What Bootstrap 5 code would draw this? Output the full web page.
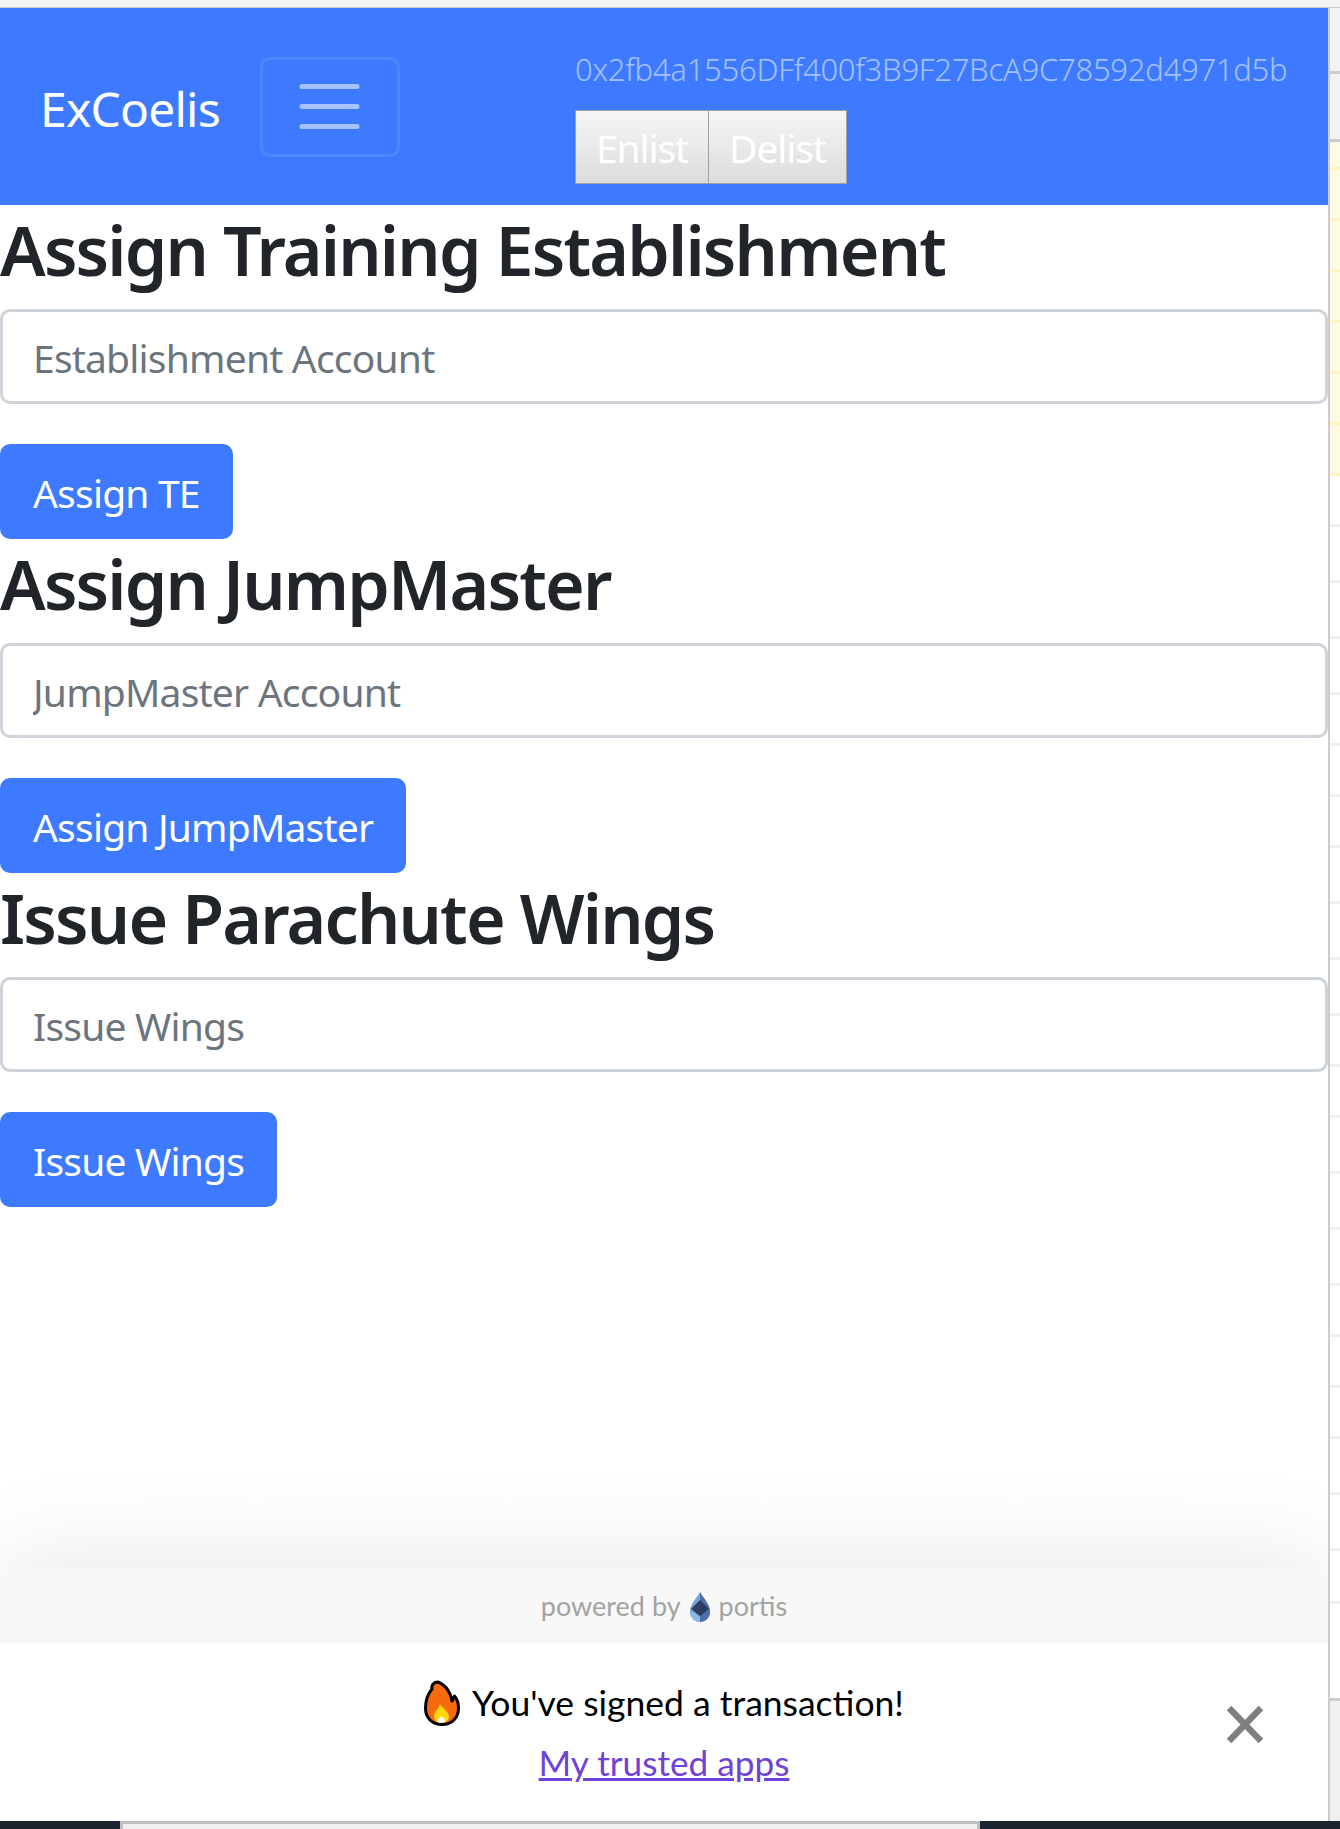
<!DOCTYPE html>
<html lang="en">
<head>
  <meta charset="UTF-8" />
  <meta name="viewport" content="width=device-width, initial-scale=1.0" />
  <title>ExCoelis</title>
  <link href="https://cdn.jsdelivr.net/npm/bootstrap@5.3.0/dist/css/bootstrap.min.css" rel="stylesheet" />
  <style>
    /* the screenshot is a page zoomed to 250%, so everything rem based scales with this */
    html { font-size: 40px; }
    body {
      --bs-body-font-family: "Noto Sans", sans-serif;
      height: 1829px;
      overflow: hidden;
      background: #fff;
      display: flex;
      flex-direction: column;
    }
    .top-strip { height: 8px; background: #f2f2f2; border-bottom: 1px solid #ccc; flex: none; }
    .window-row { flex: 1; display: flex; min-height: 0; }
    .page-col { width: 1328px; flex: none; position: relative; overflow: hidden; }
    .side-strip { flex: 1; border-left: 2px solid #ccc; display: flex; flex-direction: column; }
    .side-strip .tick { flex: none; border-bottom: 3px solid #efefef; }
    .side-strip .tick.head { background: #f2f2f2; border-bottom-color: #ccc; }
    .side-strip .tick.warn { background: #fffae3; border-bottom-color: #fff3c4; }
    .side-strip .tail { flex: 1; background: #f0f0f0; border-top: 3px solid #ccc; margin-top: 94px; }
    .bottom-row { height: 8px; flex: none; background: #1b2330; padding-left: 120px; padding-right: 360px; }
    .bottom-window { height: 8px; background: #f0f0f0; border: 3px solid #c0c0c0; border-bottom: 0; }

    .app-nav { background: #3d7aff; height: 197px; padding: 0 40px; flex-wrap: nowrap; }
    .navbar-brand { font-size: 48px; padding: 4px 0 0; margin-right: 40px; letter-spacing: -.8px; }
    .app-nav .navbar-toggler { border-width: 3px; border-radius: 10px; padding: 9.5px 29.5px; }
    .account-box { width: 713px; margin-left: auto; padding-top: 0; }
    .account-addr { font-size: 31px; font-weight: 300; line-height: 82px; height: 82px; margin-top: -2px; color: rgba(255,255,255,.55); letter-spacing: -.26px; white-space: nowrap; }
    .plain-btn {
      font-size: 39px;
      line-height: 60px;
      height: 74px;
      float: left;
      padding: 2px 20px 0;
      color: #fff;
      letter-spacing: -1.1px;
      background: linear-gradient(#f6f6f6, #dcdcdc);
      border: 1px solid #a0a0a0;
    }
    .plain-btn + .plain-btn { border-left: 0; }

    h3.sect-title { font-size: 68px; line-height: 79px; padding-top: 5px; font-weight: 600; margin-bottom: 20px; letter-spacing: -1.8px; white-space: nowrap; }
    .form-control {
      border-width: 3px;
      border-color: #ced4da;
      border-radius: 10px;
      margin-bottom: 40px;
      height: 95px;
      font-size: 39px;
      padding: 15px 30px 13px;
      letter-spacing: -.8px;
    }
    .form-control::placeholder { color: #6c757d; opacity: 1; }
    .btn-primary {
      --bs-btn-bg: #3d7aff;
      --bs-btn-border-color: #3d7aff;
      --bs-btn-border-width: 3px;
      --bs-btn-border-radius: 10px;
      --bs-btn-font-size: 39px;
      --bs-btn-line-height: 61px;
      --bs-btn-padding-x: 30px;
      display: block;
      padding-top: 15px;
      padding-bottom: 13px;
      letter-spacing: -.8px;
    }

    .portis-box {
      position: absolute;
      left: 0;
      right: 0;
      bottom: 0;
      height: 253px;
      background: #fff;
      border-top-right-radius: 16px;
      border-top-left-radius: 16px;
      box-shadow: 0 0 110px rgba(0,0,0,.11);
      font-family: "Lato", sans-serif;
    }
    .portis-brand {
      height: 75px;
      padding-top: 2px;
      background: #f8f8f8;
      border-top-right-radius: 16px;
      border-top-left-radius: 16px;
      color: #a3a3a3;
      font-size: 27px;
      gap: 9px;
    }
    .portis-msg { padding-top: 34px; font-size: 35.5px; line-height: 52px; color: #000; gap: 12px; }
    .portis-link { display: block; text-align: center; font-size: 35.2px; line-height: 50px; margin-top: 8px; color: #6f42d8; }
    .portis-close { position: absolute; right: 65px; top: 138px; width: 36px; height: 37px; display: block; }
  </style>
</head>
<body>
<div class="top-strip"></div>
<div class="window-row">
  <div class="page-col">
    <nav class="navbar navbar-dark app-nav">
      <a class="navbar-brand" href="#">ExCoelis</a>
      <button class="navbar-toggler" type="button"><span class="navbar-toggler-icon"></span></button>
      <div class="account-box">
        <div class="account-addr">0x2fb4a1556DFf400f3B9F27BcA9C78592d4971d5b</div>
        <button class="plain-btn" type="button">Enlist</button>
        <button class="plain-btn" type="button">Delist</button>
      </div>
    </nav>

    <h3 class="sect-title">Assign Training Establishment</h3>
    <input class="form-control" type="text" placeholder="Establishment Account" />
    <button class="btn btn-primary" type="button">Assign TE</button>

    <h3 class="sect-title">Assign JumpMaster</h3>
    <input class="form-control" type="text" placeholder="JumpMaster Account" />
    <button class="btn btn-primary" type="button">Assign JumpMaster</button>

    <h3 class="sect-title">Issue Parachute Wings</h3>
    <input class="form-control" type="text" placeholder="Issue Wings" />
    <button class="btn btn-primary" type="button">Issue Wings</button>

    <div class="portis-box">
      <div class="portis-brand d-flex align-items-center justify-content-center">
        <span>powered by</span>
        <svg width="20" height="30" viewBox="0 0 20 30">
          <path d="M10 0 C13 6 20 12 20 20 C20 26 15 30 10 30 C5 30 0 26 0 20 C0 12 7 6 10 0Z" fill="#6fa6d8"/>
          <path d="M10 0 C13 6 20 12 20 20 C20 26 15 30 10 30Z" fill="#4f6fa6"/>
          <path d="M10 8 L19 17 L10 24 L1 17Z" fill="#2f3d63"/>
          <path d="M1 19 L10 25 L10 30 C5 30 0 26 1 19Z" fill="#8db9e2"/>
        </svg>
        <span>portis</span>
      </div>
      <div class="portis-msg d-flex align-items-center justify-content-center">
        <svg width="36" height="46" viewBox="0 0 36 46">
          <path d="M14 2 C10 2 7 5 8 9 C3 15 1.5 21 1.5 28 C1.5 38 8 44.5 18 44.5 C28 44.5 34.5 38 34.5 28 C34.5 23 33 19 30.5 16 L28 21 C27 13 22 5 14 2Z" fill="#f9690e" stroke="#000" stroke-width="3" stroke-linejoin="round"/>
          <path d="M16 24 C19 29 24 31 25 36 C25.5 40 22 43 18 43 C13 43 9.5 40 10 35 C10.5 31 15 29 16 24Z" fill="#ffd60f"/>
          <path d="M17 36 C19 38 21 38 21 41 C20 43 15 43 13 42 C13 39 16 39 17 36Z" fill="#fff"/>
        </svg>
        <span>You've signed a transaction!</span>
      </div>
      <a class="portis-link" href="#">My trusted apps</a>
      <svg class="portis-close" viewBox="0 0 36 37">
        <path d="M2 2 L34 35 M34 2 L2 35" stroke="#7f7f7f" stroke-width="6.5" fill="none"/>
      </svg>
    </div>
  </div>
  <div class="side-strip" id="sideStrip"></div>
</div>
<div class="bottom-row"><div class="bottom-window"></div></div>

<script>
// row heights of the sheet showing behind the page on the right
const rows = [
  [66, 'head'], [68, 'head'],
  [28, 'warn'], [51, 'warn'], [51, 'warn'], [51, 'warn'], [51, 'warn'], [51, 'warn'], [51, 'warn'],
  [51, ''], [56, ''], [56, ''], [56, ''], [51, ''], [51, ''], [51, ''], [56, ''], [56, ''], [56, ''],
  [51, ''], [51, ''], [56, ''], [56, ''], [56, ''], [51, ''], [51, ''], [51, ''], [56, ''], [56, ''], [53, '']
];
const strip = document.getElementById('sideStrip');
rows.forEach(([h, cls]) => {
  const d = document.createElement('div');
  d.className = 'tick ' + cls;
  d.style.height = h + 'px';
  strip.appendChild(d);
});
const tail = document.createElement('div');
tail.className = 'tail';
strip.appendChild(tail);
</script>
<script src="https://cdn.jsdelivr.net/npm/bootstrap@5.3.0/dist/js/bootstrap.bundle.min.js"></script>
</body>
</html>
